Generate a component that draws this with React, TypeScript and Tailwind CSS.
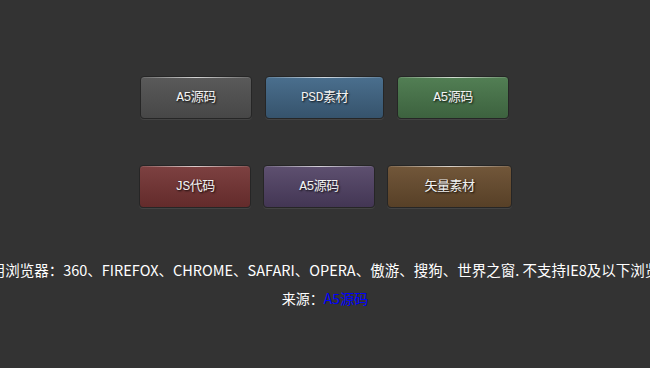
import React from 'react';

interface Btn {
    label: string;
    width: string;
    color: string;
}

const rowOne: Btn[] = [
    { label: 'A5源码', width: 'w-[112px]', color: 'bg-gradient-to-b from-[#5a5a5a] to-[#474747]' },
    { label: 'PSD素材', width: 'w-[119px]', color: 'bg-gradient-to-b from-[#4a6f8e] to-[#36536c]' },
    { label: 'A5源码', width: 'w-[112px]', color: 'bg-gradient-to-b from-[#527f54] to-[#3d623f]' },
];

const rowTwo: Btn[] = [
    { label: 'JS代码', width: 'w-[112px]', color: 'bg-gradient-to-b from-[#7d4141] to-[#632b2b]' },
    { label: 'A5源码', width: 'w-[112px]', color: 'bg-gradient-to-b from-[#5e5070] to-[#433654]' },
    { label: '矢量素材', width: 'w-[125px]', color: 'bg-gradient-to-b from-[#72573a] to-[#574027]' },
];

const GlossButton: React.FC<{ btn: Btn }> = ({ btn }) => (
    <a
        href="#"
        className={`${btn.width} ${btn.color} relative h-[43px] flex items-center justify-center rounded-[4px] border border-[#262626] text-[13px] text-[#f2f2f2] shadow-[0_1px_0_rgba(255,255,255,0.08),inset_0_1px_0_rgba(255,255,255,0.12)] [text-shadow:1px_1px_2px_rgba(0,0,0,0.9)] tracking-[-0.5px]`}
        style={{ fontFamily: '"Liberation Mono", "Noto Sans CJK SC", monospace' }}
    >
        <span className="absolute top-0 left-1 right-1 h-px bg-gradient-to-r from-transparent via-white/70 to-transparent" />
        {btn.label}
    </a>
);

export default function App() {
    return (
        <div
            className="w-[650px] h-[368px] bg-[#333333] overflow-hidden flex flex-col items-center"
            style={{ fontFamily: '"Noto Sans CJK SC", "Liberation Sans", sans-serif' }}
        >
            <div className="mt-[76px] flex gap-[13px] ml-[-1px]">
                {rowOne.map((b, i) => (
                    <GlossButton key={i} btn={b} />
                ))}
            </div>
            <div className="mt-[46px] flex gap-[12px] ml-[1px]">
                {rowTwo.map((b, i) => (
                    <GlossButton key={i} btn={b} />
                ))}
            </div>
            <div className="mt-[48px] w-full flex justify-center">
                <p className="whitespace-nowrap text-[14.5px] leading-[28px] text-white shrink-0">
                    适用浏览器：360、FIREFOX、CHROME、SAFARI、OPERA、傲游、搜狗、世界之窗. 不支持IE8及以下浏览器
                </p>
            </div>
            <p className="text-[14px] leading-[28px] text-white">
                来源：<a href="#" className="text-[#0000ff]">A5源码</a>
            </p>
        </div>
    );
}
